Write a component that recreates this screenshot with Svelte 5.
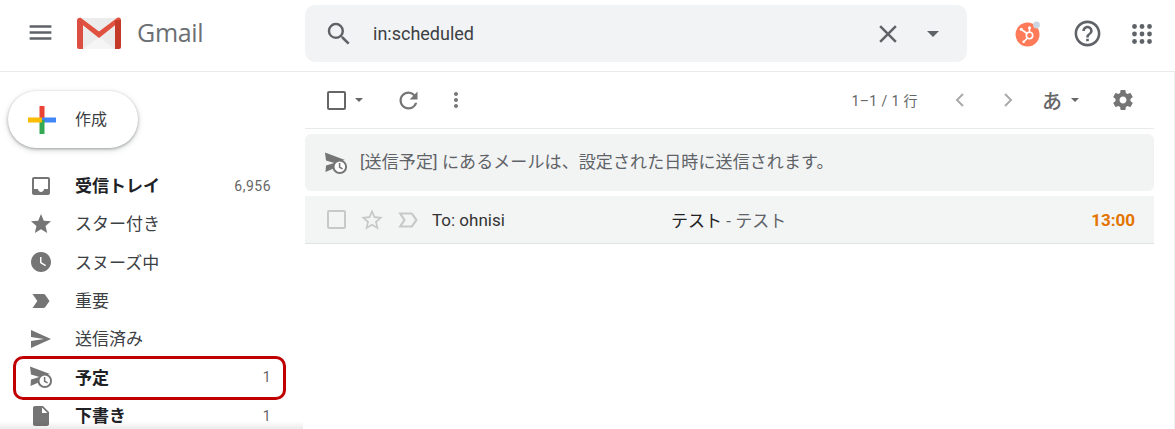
<script>
	const navItems = [
		{ label: '受信トレイ', count: '6,956', bold: true, icon: 'inbox' },
		{ label: 'スター付き', icon: 'star' },
		{ label: 'スヌーズ中', icon: 'clock' },
		{ label: '重要', icon: 'important' },
		{ label: '送信済み', icon: 'send' },
		{ label: '予定', count: '1', bold: true, icon: 'scheduled', marked: true },
		{ label: '下書き', count: '1', bold: true, icon: 'draft' }
	];

	const paths = {
		inbox: 'M19 3H4.99c-1.11 0-1.98.89-1.98 2L3 19c0 1.1.88 2 1.99 2H19c1.1 0 2-.9 2-2V5c0-1.11-.9-2-2-2zm0 12h-4c0 1.66-1.35 3-3 3s-3-1.34-3-3H4.99V5H19v10z',
		star: 'M12 17.27L18.18 21l-1.64-7.03L22 9.24l-7.19-.61L12 2 9.19 8.63 2 9.24l5.46 4.73L5.82 21z',
		clock: 'M12 2C6.47 2 2 6.48 2 12s4.47 10 10 10 10-4.48 10-10S17.52 2 12 2zm4.2 14.2L11 13V7h1.5v5.2l4.5 2.7-.8 1.3z',
		important: 'M3.5 18.99l11 .01c.67 0 1.27-.33 1.63-.84L20.5 12l-4.37-6.16c-.36-.51-.96-.84-1.63-.84l-11 .01L8.34 12 3.5 18.99z',
		send: 'M2.01 21L22 12 2.01 3 2 10l13 2-13 2z',
		draft: 'M14 2H6c-1.1 0-1.99.9-1.99 2L4 20c0 1.1.89 2 1.99 2H18c1.1 0 2-.9 2-2V8l-6-6zm-1 7V3.5L18.5 9H13z'
	};

	const gear = 'M19.43 12.98c.04-.32.07-.64.07-.98s-.03-.66-.07-.98l2.11-1.65c.19-.15.24-.42.12-.64l-2-3.46c-.12-.22-.39-.3-.61-.22l-2.49 1c-.52-.4-1.08-.73-1.69-.98l-.38-2.65A.488.488 0 0 0 14 2h-4c-.25 0-.46.18-.49.42l-.38 2.65c-.61.25-1.17.59-1.69.98l-2.49-1c-.23-.09-.49 0-.61.22l-2 3.46c-.13.22-.07.49.12.64l2.11 1.65c-.04.32-.07.65-.07.98s.03.66.07.98l-2.11 1.65c-.19.15-.24.42-.12.64l2 3.46c.12.22.39.3.61.22l2.49-1c.52.4 1.08.73 1.69.98l.38 2.65c.03.24.24.42.49.42h4c.25 0 .46-.18.49-.42l.38-2.65c.61-.25 1.17-.59 1.69-.98l2.49 1c.23.09.49 0 .61-.22l2-3.46c.12-.22.07-.49-.12-.64l-2.11-1.65zM12 15.5c-1.93 0-3.5-1.57-3.5-3.5s1.57-3.5 3.5-3.5 3.5 1.57 3.5 3.5-1.57 3.5-3.5 3.5z';
</script>

{#snippet scheduledIcon()}
	<svg class="ico" viewBox="0 0 24 24" width="24" height="24">
		<path fill="#757575" d="M1 1.5L21 9c-4 .5-7 3-8 7L1.5 21l.5-6.5 8.5-2.5-8.5-2.5z" />
		<circle cx="15.8" cy="15.8" r="6.3" fill="#fff" stroke="#757575" stroke-width="2" />
		<path fill="none" stroke="#757575" stroke-width="1.5" d="M15.6 12v4.2l3 1.6" />
	</svg>
{/snippet}

<div class="page">
	<header class="topbar">
		<div class="brand">
			<button class="menu" aria-label="メインメニュー">
				<svg viewBox="0 0 24 24" width="29" height="29"><path fill="#5f6368" d="M3 18h18v-2H3v2zm0-5h18v-2H3v2zm0-7v2h18V6H3z" /></svg>
			</button>
			<svg class="logo" viewBox="0 0 44 32" width="44" height="32">
				<path fill="#ececec" d="M2 1h40a2 2 0 0 1 2 2v27a2 2 0 0 1-2 2H2a2 2 0 0 1-2-2V3a2 2 0 0 1 2-2z" />
				<path fill="#f5f5f5" d="M6 32L22 20l16 12z" />
				<path fill="#e0523f" d="M0 3.5C0 1.5 2 .2 4 1l18 13.5L40 1c2-.8 4-.5 4 2.5L22 21 0 3.5z" />
				<path fill="#dc4e41" d="M0 3h6v29H2a2 2 0 0 1-2-2z" />
				<path fill="#c53929" d="M38 3.6L44 3v27a2 2 0 0 1-2 2h-4z" />
			</svg>
			<span class="wordmark">Gmail</span>
		</div>
		<div class="search">
			<svg viewBox="0 0 24 24" width="30" height="30"><path fill="#5f6368" d="M15.5 14h-.79l-.28-.27A6.471 6.471 0 0 0 16 9.5 6.5 6.5 0 1 0 9.5 16c1.61 0 3.09-.59 4.23-1.57l.27.28v.79l5 4.99L20.49 19l-4.99-5zm-6 0C7.01 14 5 11.99 5 9.5S7.01 5 9.5 5 14 7.01 14 9.5 11.99 14 9.5 14z" /></svg>
			<span class="query">in:scheduled</span>
			<svg class="clear" viewBox="0 0 24 24" width="30" height="30"><path fill="#5f6368" d="M19 6.41L17.59 5 12 10.59 6.41 5 5 6.41 10.59 12 5 17.59 6.41 19 12 13.41 17.59 19 19 17.59 13.41 12z" /></svg>
			<span class="caret large"></span>
		</div>
		<div class="account">
			<svg viewBox="0 0 28 28" width="28" height="28">
				<circle cx="12.5" cy="14.5" r="12" fill="#ff7a59" />
				<circle cx="21.5" cy="5" r="3.4" fill="#cbd6e2" />
				<g fill="none" stroke="#fff" stroke-width="1.6">
					<circle cx="14.5" cy="15.5" r="3.2" />
					<path d="M14.5 8v4.2M6.5 9.5l5.5 4M12 18.5l-3 3" />
				</g>
				<circle cx="14.5" cy="7.8" r="1.5" fill="#fff" />
				<circle cx="6.3" cy="9.3" r="1.5" fill="#fff" />
				<circle cx="8.7" cy="21.8" r="1.3" fill="#fff" />
			</svg>
			<svg viewBox="0 0 24 24" width="31" height="31"><path fill="#5f6368" d="M11 18h2v-2h-2v2zm1-16C6.48 2 2 6.48 2 12s4.48 10 10 10 10-4.48 10-10S17.52 2 12 2zm0 18c-4.41 0-8-3.59-8-8s3.59-8 8-8 8 3.59 8 8-3.59 8-8 8zm0-14c-2.21 0-4 1.79-4 4h2c0-1.1.9-2 2-2s2 .9 2 2c0 2-3 1.75-3 5h2c0-2.25 3-2.5 3-5 0-2.21-1.79-4-4-4z" /></svg>
			<svg viewBox="0 0 20 20" width="20" height="20" fill="#5f6368">
				{#each [2.5, 10, 17.5] as y}
					{#each [2.5, 10, 17.5] as x}
						<circle cx={x} cy={y} r="2.4" />
					{/each}
				{/each}
			</svg>
		</div>
	</header>

	<div class="body">
		<aside class="sidebar">
			<button class="compose">
				<svg viewBox="0 0 30 30" width="30" height="30">
					<rect x="12.5" y="1" width="5" height="14" fill="#ea4335" />
					<rect x="15" y="12.5" width="14" height="5" fill="#4285f4" />
					<rect x="12.5" y="15" width="5" height="14" fill="#34a853" />
					<rect x="1" y="12.5" width="14" height="5" fill="#fbbc04" />
				</svg>
				<span>作成</span>
			</button>
			<nav class="nav">
				{#each navItems as item}
					<div class="nav-row" class:bold={item.bold} class:marked={item.marked}>
						{#if item.icon === 'scheduled'}
							{@render scheduledIcon()}
						{:else}
							<svg class="ico" viewBox="0 0 24 24" width="24" height="24"><path fill="#757575" d={paths[item.icon]} /></svg>
						{/if}
						<span class="nav-label">{item.label}</span>
						{#if item.count}<span class="nav-count">{item.count}</span>{/if}
					</div>
				{/each}
			</nav>
			<div class="scroll-edge"></div>
		</aside>

		<main class="content">
			<div class="toolbar">
				<span class="checkbox dark"></span>
				<span class="caret"></span>
				<svg class="refresh" viewBox="0 0 24 24" width="27" height="27"><path fill="#757575" d="M17.65 6.35A7.958 7.958 0 0 0 12 4c-4.42 0-7.99 3.58-7.99 8s3.57 8 7.99 8c3.73 0 6.84-2.55 7.73-6h-2.08A5.99 5.99 0 0 1 12 18c-3.31 0-6-2.69-6-6s2.69-6 6-6c1.66 0 3.14.69 4.22 1.78L13 11h7V4l-2.35 2.35z" /></svg>
				<svg class="more" viewBox="0 0 24 24" width="24" height="24"><path fill="#757575" d="M12 8c1.1 0 2-.9 2-2s-.9-2-2-2-2 .9-2 2 .9 2 2 2zm0 2c-1.1 0-2 .9-2 2s.9 2 2 2 2-.9 2-2-.9-2-2-2zm0 6c-1.1 0-2 .9-2 2s.9 2 2 2 2-.9 2-2-.9-2-2-2z" /></svg>
				<span class="pager">1–1 / 1 行</span>
				<svg class="chev" viewBox="0 0 24 24" width="24" height="24"><path fill="none" stroke="#aaa" stroke-width="2" d="M15 6l-6 6 6 6" /></svg>
				<svg class="chev next" viewBox="0 0 24 24" width="24" height="24"><path fill="none" stroke="#aaa" stroke-width="2" d="M9 6l6 6-6 6" /></svg>
				<span class="ime">あ</span>
				<span class="caret"></span>
				<svg class="gear" viewBox="0 0 24 24" width="24" height="24"><path fill="#757575" d={gear} /></svg>
			</div>

			<div class="banner">
				{@render scheduledIcon()}
				<span>[送信予定] にあるメールは、設定された日時に送信されます。</span>
			</div>

			<div class="mail-row">
				<span class="checkbox"></span>
				<svg class="row-star" viewBox="0 0 24 24" width="26" height="26"><path fill="#c8c8c8" d="M22 9.24l-7.19-.62L12 2 9.19 8.63 2 9.24l5.46 4.73L5.82 21 12 17.27 18.18 21l-1.63-7.03L22 9.24zM12 15.4l-3.76 2.27 1-4.28-3.32-2.88 4.38-.38L12 6.1l1.71 4.04 4.38.38-3.32 2.88 1 4.28L12 15.4z" /></svg>
				<svg class="row-mark" viewBox="0 0 24 24" width="26" height="26"><path fill="#c8c8c8" d="M15 19H3l4.5-7L3 5h12c.65 0 1.26.31 1.63.84L21 12l-4.37 6.16c-.37.52-.98.84-1.63.84zm-8.5-2H15l3.5-5L15 7H6.5l3.5 5-3.5 5z" /></svg>
				<span class="recipient">To: ohnisi</span>
				<span class="subject">テスト <span class="snippet">- テスト</span></span>
				<span class="time">13:00</span>
			</div>
		</main>
	</div>
</div>

<style>
	:global(body) {
		margin: 0;
		background: #fff;
		overflow: hidden;
	}

	.page {
		height: 429px;
		overflow: hidden;
		font-family: Roboto, 'Noto Sans CJK JP', sans-serif;
		color: #222;
		display: flex;
		flex-direction: column;
	}

	.topbar {
		height: 71px;
		flex-shrink: 0;
		border-bottom: 1px solid #e8eaed;
		display: flex;
		align-items: center;
	}

	.brand {
		width: 305px;
		flex-shrink: 0;
		display: flex;
		align-items: center;
		padding: 0 0 6px 26px;
		box-sizing: border-box;
	}

	.menu {
		display: flex;
		padding: 0;
		border: 0;
		background: none;
		margin-right: 22px;
	}

	.wordmark {
		margin: -2px 0 0 16px;
		font-family: 'Open Sans', sans-serif;
		font-size: 25px;
		color: #6b6f73;
		letter-spacing: -0.3px;
	}

	.search {
		width: 662px;
		height: 57px;
		margin-top: -4px;
		border-radius: 10px;
		background: #f1f3f4;
		display: flex;
		align-items: center;
		padding: 0 28px 0 19px;
		box-sizing: border-box;
	}

	.query {
		margin-left: 19px;
		font-size: 18px;
		color: #3c4043;
		flex: 1;
	}

	.clear {
		margin-right: 24px;
	}

	.account {
		flex: 1;
		display: flex;
		align-items: center;
		padding-left: 48px;
		gap: 29px;
		margin-top: -4px;
	}

	.caret {
		width: 0;
		height: 0;
		border: 4.5px solid transparent;
		border-top-color: #666;
		border-bottom: 0;
	}

	.caret.large {
		border-width: 6px;
		border-bottom: 0;
		border-top-color: #5f6368;
	}

	.body {
		flex: 1;
		display: flex;
		min-height: 0;
	}

	.sidebar {
		width: 305px;
		flex-shrink: 0;
		position: relative;
		overflow: hidden;
	}

	.compose {
		margin: 19px 0 0 8px;
		width: 130px;
		height: 57px;
		border: 0;
		border-radius: 29px;
		background: #fff;
		box-shadow: 0 1px 3px rgba(60, 64, 67, 0.4), 0 2px 6px rgba(60, 64, 67, 0.2);
		display: flex;
		align-items: center;
		padding: 0 0 0 19px;
		box-sizing: border-box;
		font: inherit;
		font-size: 16px;
		color: #3c4043;
	}

	.compose span {
		margin: -4px 0 0 18px;
	}

	.nav {
		margin-top: 18.4px;
	}

	.nav-row {
		height: 38.33px;
		display: flex;
		align-items: center;
		padding: 0 34px 0 29px;
		width: 305px;
		box-sizing: border-box;
		position: relative;
		font-size: 17px;
		color: #3c4043;
	}

	.nav-row.bold {
		font-weight: 700;
		color: #202124;
	}

	.nav-row.marked::after {
		content: '';
		position: absolute;
		left: 13px;
		top: -2px;
		width: 273px;
		height: 44px;
		box-sizing: border-box;
		border: 3px solid #c00000;
		border-radius: 10px;
	}

	.nav-label {
		margin: -2px 0 0 22px;
		flex: 1;
	}

	.nav-count {
		font-weight: 400;
		font-size: 14px;
		color: #666;
		letter-spacing: 0.5px;
	}

	.scroll-edge {
		position: absolute;
		left: 0;
		right: 2px;
		bottom: 0;
		height: 8px;
		background: linear-gradient(to bottom, rgba(0, 0, 0, 0), rgba(0, 0, 0, 0.08));
	}

	.content {
		flex: 1;
		min-width: 0;
		padding-right: 20px;
		border-right: 1px solid #eef0f1;
		display: flex;
		flex-direction: column;
	}

	.toolbar {
		height: 56px;
		flex-shrink: 0;
		border-bottom: 1px solid #e8eaed;
		display: flex;
		align-items: center;
		padding-left: 22px;
		color: #666;
	}

	.checkbox {
		width: 15px;
		height: 15px;
		border: 2px solid #666;
		border-radius: 2px;
		flex-shrink: 0;
	}

	.checkbox:not(.dark) {
		border-color: #c8c8c8;
	}

	.toolbar .caret {
		margin-left: 9px;
	}

	.refresh {
		margin-left: 32px;
	}

	.more {
		margin-left: 22px;
	}

	.pager {
		margin-left: auto;
		font-size: 14px;
		letter-spacing: 0.4px;
	}

	.chev {
		margin-left: 30px;
	}

	.chev.next {
		margin-left: 24px;
	}

	.ime {
		margin-left: 22px;
		font-size: 20px;
		font-weight: 500;
	}

	.toolbar .ime + .caret {
		margin-left: 9px;
	}

	.gear {
		margin-left: 32px;
		margin-right: 19px;
	}

	.banner {
		margin-top: 5px;
		height: 57px;
		flex-shrink: 0;
		border-radius: 6px;
		background: #f2f4f4;
		display: flex;
		align-items: center;
		padding-left: 19px;
		font-size: 17px;
		letter-spacing: 0.1px;
		color: #5f6368;
	}

	.banner span {
		margin: -5px 0 0 12px;
	}

	.mail-row {
		margin-top: 5px;
		height: 48px;
		flex-shrink: 0;
		box-sizing: border-box;
		background: #f3f5f5;
		border-bottom: 1px solid #e0e3e3;
		display: flex;
		align-items: center;
		padding: 0 19px 0 22px;
		font-size: 17px;
	}

	.row-star {
		margin-left: 13px;
	}

	.row-mark {
		margin-left: 10px;
	}

	.recipient {
		margin-left: 11px;
		width: 239px;
		color: #333;
	}

	.subject {
		flex: 1;
		color: #222;
	}

	.snippet {
		color: #5f6368;
	}

	.time {
		font-weight: 700;
		font-size: 17px;
		color: #e37400;
	}
</style>
